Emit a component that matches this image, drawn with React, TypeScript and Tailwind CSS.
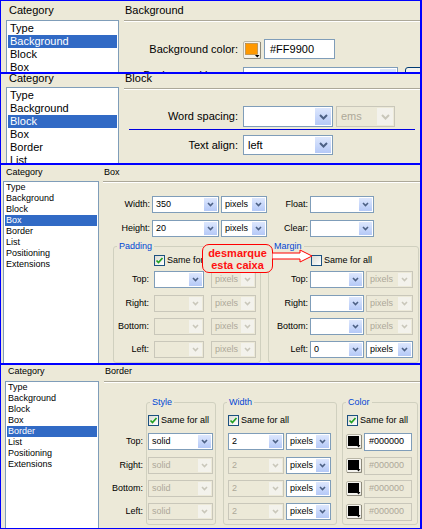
import React from "react";

const cats = ["Type", "Background", "Block", "Box", "Border", "List", "Positioning", "Extensions"];

function Chevron({ off, small }: { off?: boolean; small?: boolean }) {
  const c = off ? "#c9c7ba" : "#4d6185";
  return small ? (
    <svg width="7" height="5" viewBox="0 0 7 5">
      <polyline points="1,1 3.5,3.5 6,1" fill="none" stroke={c} strokeWidth="1.6" />
    </svg>
  ) : (
    <svg width="9" height="6" viewBox="0 0 9 6">
      <polyline points="1,1 4.5,4.5 8,1" fill="none" stroke={c} strokeWidth="2" />
    </svg>
  );
}

type ComboProps = { cls: string; text?: string; disabled?: boolean; btnOff?: boolean; small?: boolean };

function Combo({ cls, text = "", disabled, btnOff, small }: ComboProps) {
  const box = disabled ? "border-[#c9c7ba] bg-[#ece9d8] text-[#aca899]" : "border-[#7f9db9] bg-white text-black";
  const off = btnOff ?? disabled;
  return (
    <div className={`flex shrink-0 border ${box} ${cls}`}>
      <span className={`flex-1 self-center whitespace-nowrap overflow-hidden ${small ? "pl-[3px]" : "pl-[4px]"}`}>{text}</span>
      <span
        className={`m-[1px] flex items-center justify-center ${small ? "w-[13px]" : "w-[16px]"} ${
          off ? "bg-[#f3f2ec]" : "bg-linear-to-b from-[#dde7fd] to-[#b5c9f7]"
        }`}
      >
        <Chevron off={off} small={small} />
      </span>
    </div>
  );
}

function TextBox({ cls, text = "", disabled, small }: { cls: string; text?: string; disabled?: boolean; small?: boolean }) {
  return (
    <div
      className={`shrink-0 border flex items-center whitespace-nowrap ${
        disabled ? "border-[#c9c7ba] bg-[#ece9d8] text-[#aca899]" : "border-[#7f9db9] bg-white text-black"
      } ${small ? "pl-[4px]" : "pl-[5px]"} ${cls}`}
    >
      {text}
    </div>
  );
}

function Swatch({ big, color }: { big?: boolean; color: string }) {
  if (big) {
    return (
      <svg width="18" height="18" viewBox="0 0 18 18" className="shrink-0 ml-[5px] mt-[2px]">
        <rect x="0.5" y="0.5" width="17" height="17" rx="1.5" fill="#f4f3ee" stroke="#b9b6a6" />
        <line x1="1" y1="17.5" x2="17.5" y2="17.5" stroke="#8d8a7c" />
        <line x1="17.5" y1="1" x2="17.5" y2="17.5" stroke="#8d8a7c" />
        <rect x="2.5" y="2.5" width="12" height="11" fill={color} stroke="#a07a3c" strokeWidth="0.6" />
        <polygon points="12,14 16.5,14 14.25,16.5" fill="#000" />
      </svg>
    );
  }
  return (
    <svg width="16" height="15" viewBox="0 0 16 15" className="shrink-0 ml-[3px]">
      <rect x="0.5" y="0.5" width="15" height="14" rx="1.5" fill="#f4f3ee" stroke="#b9b6a6" />
      <line x1="1" y1="14.5" x2="15.5" y2="14.5" stroke="#8d8a7c" />
      <line x1="15.5" y1="1" x2="15.5" y2="14.5" stroke="#8d8a7c" />
      <rect x="2" y="2" width="11" height="10" fill={color} />
      <polygon points="10.5,11 14.5,11 12.5,13.5" fill="#000" />
    </svg>
  );
}

function Check({ checked, cls = "" }: { checked?: boolean; cls?: string }) {
  return (
    <span className={`w-[11px] h-[11px] shrink-0 border border-[#1c5180] bg-linear-to-br from-[#dcdcd4] to-white flex items-center justify-center ${cls}`}>
      {checked && (
        <svg width="9" height="9" viewBox="0 0 9 9">
          <polyline points="1.5,4.5 3.5,6.5 7.5,2" fill="none" stroke="#21a121" strokeWidth="1.7" />
        </svg>
      )}
    </span>
  );
}

function TitleLine() {
  return <div className="h-[2px] border-t border-b border-t-[#aca899] border-b-white" />;
}

function P1() {
  return (
    <div className="h-[71px] shrink-0 overflow-hidden bg-[#ece9d8] flex text-[11px] leading-[13px]">
      <div className="w-[123px] shrink-0">
        <div className="h-[19px] pl-[8px] pt-[3px]">Category</div>
        <div className="ml-[5px] w-[113px] h-[80px] border border-[#7f9db9] bg-white p-[1px]">
          {cats.map((c) => (
            <div key={c} className={`h-[13px] pl-[2px] whitespace-nowrap ${c === "Background" ? "bg-[#316ac5] text-white" : ""}`}>
              {c}
            </div>
          ))}
        </div>
      </div>
      <div className="flex-1 min-w-0">
        <div className="h-[19px] pl-[1px] pt-[3px]">Background</div>
        <TitleLine />
        <div className="mt-[17px] h-[20px] flex items-center">
          <div className="w-[114px] shrink-0 text-right whitespace-nowrap">Background color:</div>
          <Swatch big color="#ff9900" />
          <TextBox cls="ml-[3px] w-[71px] h-[20px]" text="#FF9900" />
        </div>
        <div className="mt-[8px] h-[23px] flex">
          <div className="w-[114px] shrink-0 text-right whitespace-nowrap mt-[2px]">Background image:</div>
          <Combo cls="ml-[5px] w-[155px] h-[21px]" />
          <div className="ml-[7px] w-[75px] h-[23px] shrink-0 border border-[#003c74] rounded-[3px] bg-[#f4f3ee] flex items-center justify-center">
            Browse...
          </div>
        </div>
      </div>
    </div>
  );
}

function P2() {
  return (
    <div className="h-[89px] shrink-0 overflow-hidden bg-[#ece9d8] flex text-[11px] leading-[13px]">
      <div className="w-[123px] shrink-0">
        <div className="h-[15px] pl-[8px]">
          <div className="mt-[-2px]">Category</div>
        </div>
        <div className="ml-[5px] w-[113px] h-[90px] border border-[#7f9db9] bg-white p-[1px]">
          {cats.map((c) => (
            <div key={c} className={`h-[13px] pl-[2px] whitespace-nowrap ${c === "Block" ? "bg-[#316ac5] text-white" : ""}`}>
              {c}
            </div>
          ))}
        </div>
      </div>
      <div className="flex-1 min-w-0">
        <div className="h-[16px] pl-[1px]">
          <div className="mt-[-2px]">Block</div>
        </div>
        <TitleLine />
        <div className="mt-[16px] h-[21px] flex items-center">
          <div className="w-[114px] shrink-0 text-right whitespace-nowrap">Word spacing:</div>
          <Combo cls="ml-[5px] w-[90px] h-[21px]" />
          <Combo cls="ml-[3px] w-[59px] h-[21px]" text="ems" disabled />
        </div>
        <div className="mt-[2px] mx-[5px] h-[1px] bg-[#0000e0]" />
        <div className="mt-[5px] h-[20px] flex items-center">
          <div className="w-[114px] shrink-0 text-right whitespace-nowrap">Text align:</div>
          <Combo cls="ml-[5px] w-[90px] h-[20px]" text="left" />
        </div>
      </div>
    </div>
  );
}

function SmallList({ sel, cls }: { sel: string; cls: string }) {
  return (
    <div className={`border border-[#7f9db9] bg-white ${cls}`}>
      {cats.map((c) => (
        <div key={c} className={`h-[11px] mx-[1px] pl-[1px] whitespace-nowrap ${c === sel ? "bg-[#316ac5] text-white" : ""}`}>
          {c}
        </div>
      ))}
    </div>
  );
}

function Legend({ children }: { children: React.ReactNode }) {
  return <legend className="ml-[3px] px-[2px] text-[#0046d5] leading-[11px]">{children}</legend>;
}

function P3() {
  const rowsP = [
    { l: "Top:", on: true },
    { l: "Right:", on: false },
    { l: "Bottom:", on: false },
    { l: "Left:", on: false },
  ];
  const rowsM = ["Top:", "Right:", "Bottom:", "Left:"];
  const mts = ["mt-[5px]", "mt-[7px]", "mt-[6px]", "mt-[6px]"];
  return (
    <div className="relative h-[198px] shrink-0 overflow-hidden bg-[#ece9d8] flex text-[9px] leading-[11px]">
      <div className="w-[102px] shrink-0">
        <div className="h-[16px] pl-[5px] pt-[2px]">Category</div>
        <SmallList sel="Box" cls="ml-[2px] w-[96px] h-[190px]" />
      </div>
      <div className="flex-1 min-w-0">
        <div className="h-[16px] pl-[1px] pt-[2px]">Box</div>
        <TitleLine />
        <div className="mt-[13px] h-[17px] flex items-center">
          <div className="w-[47px] shrink-0 text-right">Width:</div>
          <Combo small cls="ml-[2px] w-[67px] h-[17px]" text="350" />
          <Combo small cls="ml-[2px] w-[46px] h-[17px]" text="pixels" />
          <div className="w-[41px] shrink-0 text-right">Float:</div>
          <Combo small cls="ml-[2px] w-[64px] h-[17px]" />
        </div>
        <div className="mt-[7px] h-[17px] flex items-center">
          <div className="w-[47px] shrink-0 text-right">Height:</div>
          <Combo small cls="ml-[2px] w-[67px] h-[17px]" text="20" />
          <Combo small cls="ml-[2px] w-[46px] h-[17px]" text="pixels" />
          <div className="w-[41px] shrink-0 text-right">Clear:</div>
          <Combo small cls="ml-[2px] w-[64px] h-[17px]" />
        </div>
        <div className="mt-[4px] flex">
          <fieldset className="ml-[10px] w-[148px] h-[122px] border border-[#d0d0bf] rounded-[3px]">
            <Legend>Padding</Legend>
            <div className="mt-[3px] h-[11px] flex items-center ml-[40px]">
              <Check checked />
              <span className="ml-[2px] whitespace-nowrap">Same for all</span>
            </div>
            {rowsP.map((r, i) => (
              <div key={r.l} className={`${mts[i]} h-[17px] flex items-center`}>
                <div className="w-[35px] shrink-0 text-right">{r.l}</div>
                <Combo small cls="ml-[5px] w-[50px] h-[17px]" disabled={!r.on} />
                <Combo small cls="ml-[7px] w-[45px] h-[17px]" text="pixels" disabled />
              </div>
            ))}
          </fieldset>
          <fieldset className="ml-[7px] w-[151px] h-[122px] border border-[#d0d0bf] rounded-[3px]">
            <Legend>Margin</Legend>
            <div className="mt-[3px] h-[11px] flex items-center ml-[42px]">
              <Check />
              <span className="ml-[2px] whitespace-nowrap">Same for all</span>
            </div>
            {rowsM.map((l, i) => (
              <div key={l} className={`${mts[i]} h-[17px] flex items-center`}>
                <div className="w-[39px] shrink-0 text-right">{l}</div>
                <Combo small cls="ml-[2px] w-[54px] h-[17px]" text={l === "Left:" ? "0" : ""} />
                <Combo small cls="ml-[2px] w-[47px] h-[17px]" text="pixels" disabled={l !== "Left:"} />
              </div>
            ))}
          </fieldset>
        </div>
      </div>
      <div className="absolute left-[201px] top-[79px] w-[71px] h-[29px] border border-[#ff0000] rounded-[7px] bg-[#ece9d8] flex flex-col items-center justify-center text-[#ff1010] font-bold text-[11px] leading-[12px]">
        <span>desmarque</span>
        <span>esta caixa</span>
      </div>
      <svg className="absolute left-[271px] top-[84px]" width="42" height="16" viewBox="0 0 42 16">
        <polygon points="0,4 28,4 28,1 40,7 28,13 28,10 0,10" fill="#ffffff" stroke="#ff0000" strokeWidth="1" />
      </svg>
    </div>
  );
}

function P4() {
  const labels = ["Top:", "Right:", "Bottom:", "Left:"];
  const mts = ["mt-0", "mt-[7px]", "mt-[6px]", "mt-[6px]"];
  const mts2 = ["mt-[7px]", "mt-[7px]", "mt-[6px]", "mt-[6px]"];
  return (
    <div className="h-[163px] shrink-0 overflow-hidden bg-[#ece9d8] flex text-[9px] leading-[11px]">
      <div className="w-[103px] shrink-0">
        <div className="h-[16px] pl-[7px] pt-[1px]">Category</div>
        <SmallList sel="Border" cls="ml-[4px] w-[94px] h-[160px]" />
      </div>
      <div className="flex-1 min-w-0">
        <div className="h-[16px] pl-[1px] pt-[1px]">Border</div>
        <TitleLine />
        <div className="flex">
          <div className="w-[39px] shrink-0 pt-[50px]">
            {labels.map((l, i) => (
              <div key={l} className={`${mts[i]} h-[17px] flex items-center justify-end`}>
                {l}
              </div>
            ))}
          </div>
          <fieldset className="ml-[3px] mt-[14px] w-[70px] h-[128px] border border-[#d0d0bf] rounded-[3px]">
            <Legend>Style</Legend>
            <div className="mt-[7px] h-[11px] flex items-center ml-[1px]">
              <Check checked />
              <span className="ml-[2px] whitespace-nowrap">Same for all</span>
            </div>
            {labels.map((l, i) => (
              <div key={l} className={`${mts2[i]} h-[17px] flex items-center`}>
                <Combo small cls="ml-[1px] w-[65px] h-[17px]" text="solid" disabled={i > 0} />
              </div>
            ))}
          </fieldset>
          <fieldset className="ml-[7px] mt-[14px] w-[114px] h-[128px] border border-[#d0d0bf] rounded-[3px]">
            <Legend>Width</Legend>
            <div className="mt-[7px] h-[11px] flex items-center ml-[4px]">
              <Check checked />
              <span className="ml-[2px] whitespace-nowrap">Same for all</span>
            </div>
            {labels.map((l, i) => (
              <div key={l} className={`${mts2[i]} h-[17px] flex items-center`}>
                <Combo small cls="ml-[4px] w-[56px] h-[17px]" text="2" disabled={i > 0} />
                <Combo small cls="ml-[2px] w-[45px] h-[17px]" text="pixels" />
              </div>
            ))}
          </fieldset>
          <fieldset className="ml-[5px] mt-[14px] w-[76px] h-[128px] border border-[#d0d0bf] rounded-[3px]">
            <Legend>Color</Legend>
            <div className="mt-[7px] h-[11px] flex items-center ml-[4px]">
              <Check checked />
              <span className="ml-[2px] whitespace-nowrap">Same for all</span>
            </div>
            {labels.map((l, i) => (
              <div key={l} className={`${mts2[i]} h-[17px] flex items-center`}>
                <Swatch color="#000000" />
                <TextBox small cls="ml-[2px] w-[48px] h-[18px]" text="#000000" disabled={i > 0} />
              </div>
            ))}
          </fieldset>
        </div>
      </div>
    </div>
  );
}

export default function App() {
  return (
    <div className="w-[422px] h-[529px] bg-[#0000ff] pl-[1px] pt-[1px] pr-[2px] pb-[1px] flex flex-col gap-[2px] font-['Liberation_Sans',Arial,sans-serif] text-black">
      <P1 />
      <P2 />
      <P3 />
      <P4 />
    </div>
  );
}
